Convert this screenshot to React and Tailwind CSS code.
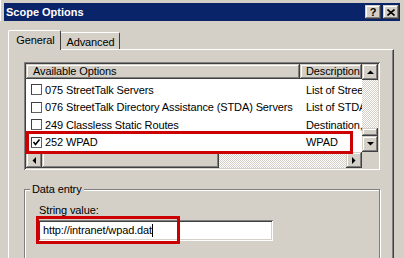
import React from "react";

const raised =
  "shadow-[inset_-1px_-1px_0_#404040,inset_1px_1px_0_#d4d0c8,inset_-2px_-2px_0_#808080,inset_2px_2px_0_#ffffff]";
const sunken =
  "shadow-[inset_1px_1px_0_#808080,inset_-1px_-1px_0_#ffffff,inset_2px_2px_0_#404040,inset_-2px_-2px_0_#d4d0c8]";
const checker =
  "bg-[repeating-conic-gradient(#d4d0c8_0_25%,#ffffff_0_50%)] bg-[length:2px_2px]";

function Arrow({ dir }) {
  const pts = {
    up: "0,4 7,4 3.5,0.5",
    down: "0,0 7,0 3.5,3.5",
    left: "4,0 4,7 0.5,3.5",
    right: "0,0 0,7 3.5,3.5",
  }[dir];
  const vert = dir === "up" || dir === "down";
  return (
    <svg width={vert ? 7 : 4} height={vert ? 4 : 7} viewBox={vert ? "0 0 7 4" : "0 0 4 7"}>
      <polygon points={pts} fill="#000" />
    </svg>
  );
}

function SBtn({ dir }) {
  return (
    <div className={`w-[16px] h-[16px] shrink-0 bg-[#d4d0c8] flex items-center justify-center ${raised}`}>
      <Arrow dir={dir} />
    </div>
  );
}

function Check({ on }) {
  return (
    <div className="w-[11px] h-[11px] shrink-0 bg-white border border-[#404040] border-r-[#606060] border-b-[#606060] flex items-center justify-center">
      {on && (
        <svg width="9" height="9" viewBox="0 0 9 9">
          <polyline points="1.5,4 3.5,6.5 7.5,1.5" fill="none" stroke="#000" strokeWidth="1.6" />
        </svg>
      )}
    </div>
  );
}

const rows = [
  { name: "075 StreetTalk Servers", desc: "List of Stree", on: false },
  { name: "076 StreetTalk Directory Assistance (STDA) Servers", desc: "List of STDA", on: false },
  { name: "249 Classless Static Routes", desc: "Destination,", on: false },
  { name: "252 WPAD", desc: "WPAD", on: true },
];

export default function App() {
  return (
    <div
      className="relative w-[404px] h-[258px] overflow-hidden bg-[#d4d0c8] text-[11px] tracking-[-0.12px] text-black"
      style={{ fontFamily: '"Liberation Sans", Arial, sans-serif' }}
    >
      {/* window frame */}
      <div className="pt-[3px] pl-[3px] pr-[4px] border-l border-white">
        <div className="h-[18px] bg-[#0a246a] flex items-center justify-between pl-[2px] pr-[1px]">
          <span className="text-white font-bold text-[11px] tracking-normal leading-none">Scope Options</span>
          <div className="flex gap-[2px]">
            <div className={`w-[16px] h-[14px] bg-[#d4d0c8] flex items-center justify-center ${raised}`}>
              <span className="font-bold text-[11px] leading-none">?</span>
            </div>
            <div className={`w-[16px] h-[14px] bg-[#d4d0c8] flex items-center justify-center ${raised}`}>
              <svg width="8" height="7" viewBox="0 0 8 7">
                <path d="M0.5 0.5 L7.5 6.5 M7.5 0.5 L0.5 6.5" stroke="#000" strokeWidth="1.6" />
              </svg>
            </div>
          </div>
        </div>
      </div>

      {/* tabs */}
      <div className="mt-[9px] ml-[8px] flex items-end h-[19px]">
        <div className="relative z-10 h-[20px] -mb-px w-[53px] bg-[#d4d0c8] border-l border-t border-white border-r border-r-[#404040] rounded-tl-[2px] rounded-tr-[2px] flex items-start justify-center pt-[3px] pl-[2px]">
          <span className="leading-[13px]">General</span>
        </div>
        <div className="h-[17px] w-[59px] bg-[#d4d0c8] border-t border-white border-r border-r-[#404040] rounded-tr-[2px] flex items-start justify-center pt-[3px] pl-[1px]">
          <span className="leading-[13px]">Advanced</span>
        </div>
      </div>

      {/* panel */}
      <div className="ml-[8px] w-[386px] h-[220px] border-l border-t border-white border-r border-r-[#404040] shadow-[inset_-1px_0_0_#808080] pt-[12px] pl-[15px]">
        {/* list box */}
        <div className={`w-[356px] h-[108px] bg-white p-[2px] ${sunken}`}>
          <div className="grid grid-cols-[336px_16px] grid-rows-[88px_16px]">
            <div className="overflow-hidden">
              <div className="flex h-[15px]">
                <div className={`w-[274px] bg-[#d4d0c8] pl-[7px] flex items-center ${raised}`}>Available Options</div>
                <div className={`w-[62px] bg-[#d4d0c8] pl-[6px] flex items-center whitespace-nowrap ${raised}`}>Description</div>
              </div>
              <div className="pt-[2px]">
                {rows.map((r) => (
                  <div key={r.name} className="flex h-[17.5px] items-center whitespace-nowrap">
                    <div className="w-[274px] flex items-center pl-[5px] gap-[3px]">
                      <Check on={r.on} />
                      <span>{r.name}</span>
                    </div>
                    <div className="w-[62px] pl-[6px]">{r.desc}</div>
                  </div>
                ))}
              </div>
            </div>
            {/* vertical scrollbar */}
            <div className="flex flex-col h-[88px]">
              <SBtn dir="up" />
              <div className={`flex-1 ${checker}`} />
              <div className={`h-[8px] bg-[#d4d0c8] ${raised}`} />
              <SBtn dir="down" />
            </div>
            {/* horizontal scrollbar */}
            <div className="flex h-[16px]">
              <SBtn dir="left" />
              <div className={`w-[177px] bg-[#d4d0c8] ${raised}`} />
              <div className={`flex-1 ${checker}`} />
              <SBtn dir="right" />
            </div>
            <div className="bg-[#d4d0c8]" />
          </div>
        </div>

        {/* group box */}
        <div className="relative mt-[19px] w-[356px] h-[80px] border border-[#808080] shadow-[inset_1px_1px_0_#ffffff,1px_1px_0_#ffffff] pt-[14px] pl-[14px]">
          <span className="absolute -top-[7px] left-[5px] bg-[#d4d0c8] px-[2px] leading-[13px]">Data entry</span>
          <div className="leading-[13px]">String value:</div>
          <div className={`mt-[3px] -ml-px w-[235px] h-[21px] bg-white flex items-center pl-[5px] ${sunken}`}>
            <span>http://intranet/wpad.dat</span>
            <span className="w-px h-[13px] bg-black" />
          </div>
        </div>
      </div>

      {/* annotations */}
      <div className="absolute left-[26px] top-[131px] w-[327px] h-[23px] border-[3px] border-[#cc0000]" />
      <div className="absolute left-[36px] top-[216px] w-[144px] h-[28px] border-[3px] border-[#cc0000]" />
    </div>
  );
}
